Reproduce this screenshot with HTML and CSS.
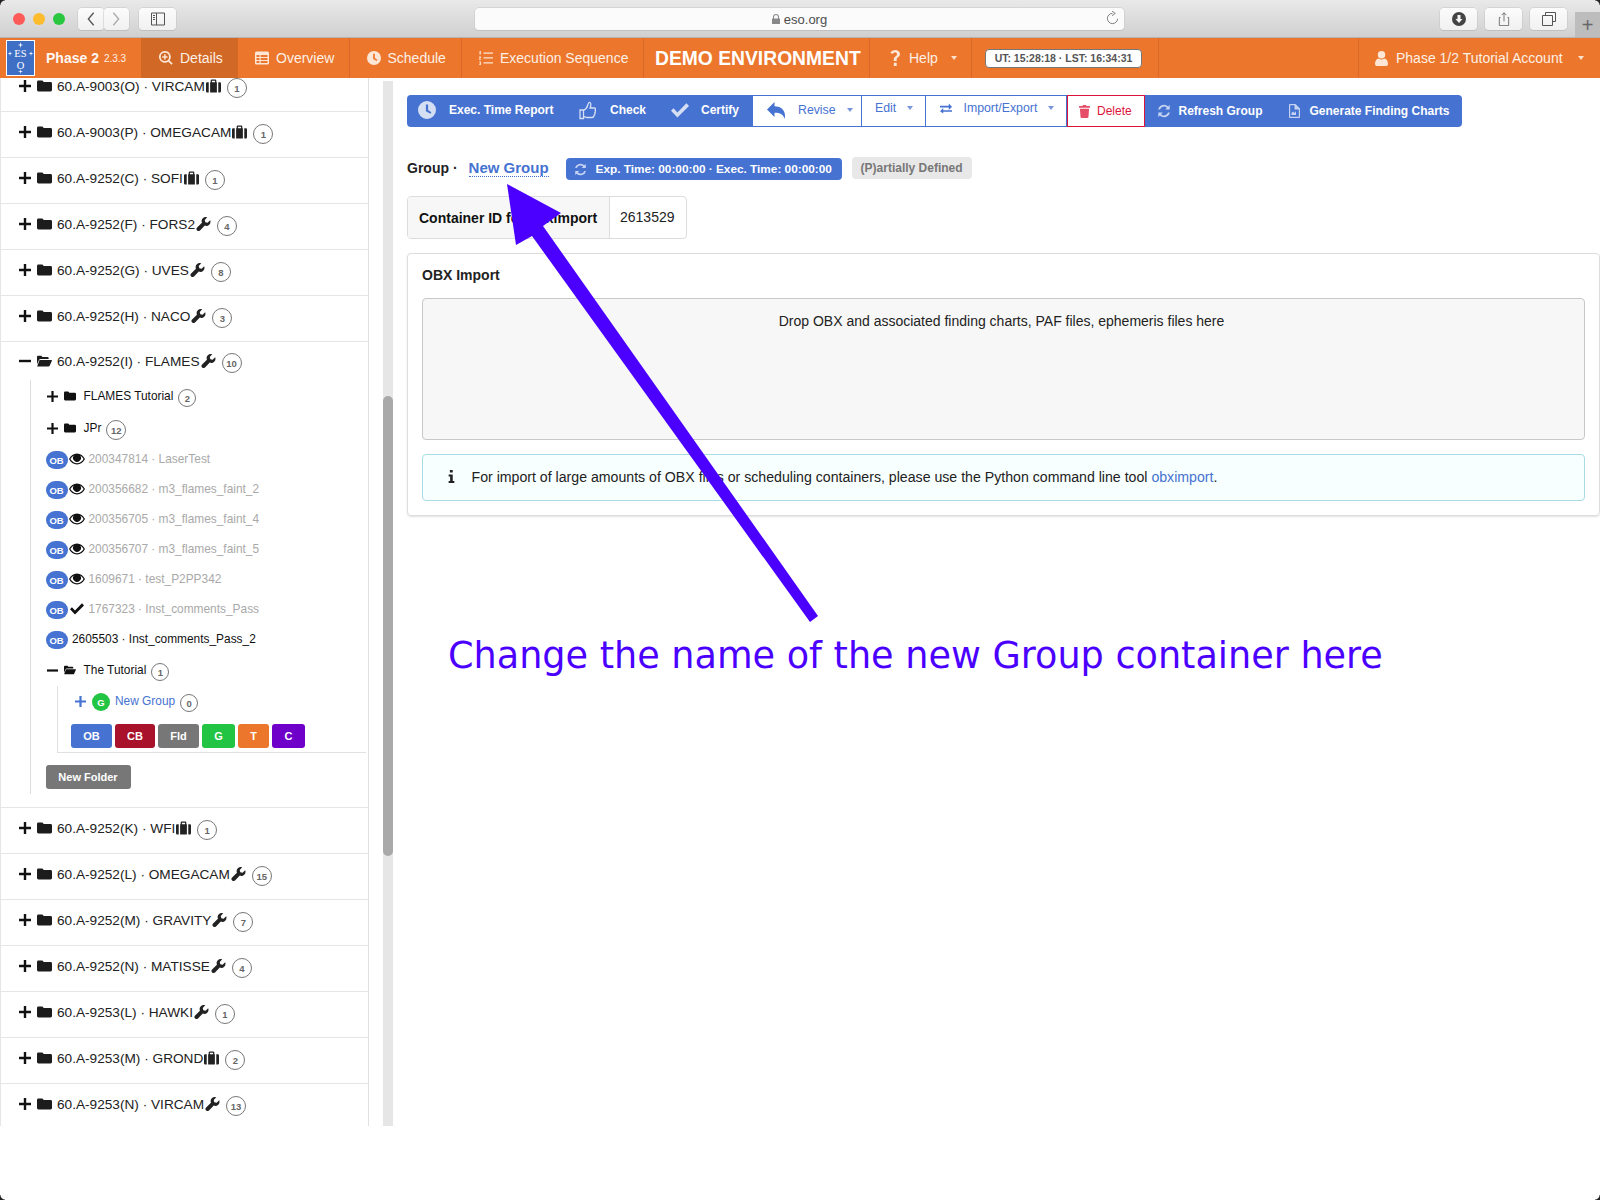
FILE: index.html
```html
<!DOCTYPE html>
<html lang="en">
<head>
<meta charset="utf-8">
<title>Phase 2</title>
<link rel="stylesheet" href="styles.css">
</head>
<body>
<svg class="defs" xmlns="http://www.w3.org/2000/svg">
  <symbol id="plus" viewBox="0 0 12 12"><path d="M4.800 0h2.400v4.800H12v2.400H7.200V12H4.800V7.200H0V4.800h4.800z"/></symbol>
  <symbol id="minus" viewBox="0 0 12 12"><rect x="0" y="4.800" width="12" height="2.400"/></symbol>
  <symbol id="folder" viewBox="0 0 15 12"><path d="M1.400 0.500h3.600a1.400 1.400 0 0 1 1.200.8l.4.7h7a1.400 1.400 0 0 1 1.400 1.400v6.700a1.400 1.400 0 0 1-1.400 1.400H1.400A1.400 1.400 0 0 1 0 10.100V1.900A1.400 1.400 0 0 1 1.400.5z"/></symbol>
  <symbol id="folder-open" viewBox="0 0 16 12"><path d="M0 9.500V1.500A1.200 1.200 0 0 1 1.200.3h3.400l1.200 1.400h5.400a1.200 1.200 0 0 1 1.200 1.200v1H3.800a2 2 0 0 0-1.700 1zM3 5h12.500a.5.5 0 0 1 .4.700l-2.400 5.300a1.500 1.500 0 0 1-1.300.8H.7a.4.4 0 0 1-.4-.6l2-5.300A1.200 1.200 0 0 1 3 5z"/></symbol>
  <symbol id="wrench" viewBox="0 0 16 16"><path d="M15.600 3.700 12.700 6.600l-2.600-.7-.7-2.600L12.300.4A4.700 4.700 0 0 0 6.200 6.500L.7 12a2.300 2.300 0 0 0 3.300 3.300L9.500 9.800a4.700 4.700 0 0 0 6.100-6.100z"/></symbol>
  <symbol id="case" viewBox="0 0 16 14"><path d="M5 3V1.200A1.200 1.200 0 0 1 6.200 0h3.600A1.200 1.200 0 0 1 11 1.200V3h.6v11H4.400V3zM6.300 3h3.400V1.300H6.300zM0 4.300A1.300 1.300 0 0 1 1.300 3h1.600v11H1.300A1.300 1.300 0 0 1 0 12.700zM13.100 3h1.600A1.300 1.300 0 0 1 16 4.300v8.400a1.300 1.300 0 0 1-1.300 1.300h-1.600z"/></symbol>
  <symbol id="eye" viewBox="0 0 16 12"><path fill-rule="evenodd" d="M8 .5c3.500 0 6.300 2.200 8 5.500-1.700 3.300-4.500 5.500-8 5.500S1.700 9.300 0 6C1.700 2.700 4.500.5 8 .5zM1.400 6C2.900 8.600 5.200 10.300 8 10.300S13.100 8.600 14.600 6c-.9-1.500-2-2.700-3.400-3.500a4 4 0 1 1-6.400 0C3.400 3.300 2.300 4.500 1.400 6z"/><circle cx="6.700" cy="4.200" r="1.200"/></symbol>
  <symbol id="check" viewBox="0 0 16 13"><path d="M2.200 4.400 0 6.700 5.700 12.800 16 2.400 13.700 0 5.700 8.200z"/></symbol>
  <symbol id="clock" viewBox="0 0 16 16"><path fill-rule="evenodd" d="M8 0a8 8 0 1 1 0 16A8 8 0 0 1 8 0zM7 3v6l4 2.400.9-1.400L9 8V3z"/></symbol>
  <symbol id="thumb" viewBox="0 0 17 18"><path fill="none" stroke="currentColor" stroke-width="1.300" d="M1 8.500h3.500v8.500H1zM4.500 9c2-1 3.700-3 4.300-5.500.3-1.300.5-2.700 1.500-2.700 1.600 0 2 2.400.8 5.700h4c1.600 0 1.800 1.500 1 2.300.7.900.5 2-.3 2.500.4 1 0 2-.8 2.300.2 1.200-.5 2.400-2 2.400H8c-1.300 0-2.400-.8-3.500-1"/></symbol>
  <symbol id="reply" viewBox="0 0 18 17"><path d="M7.500 0v4.200C13 4.300 18 7 18 14c0 1-.2 2-.5 3-.8-4.400-4.200-6.300-10-6.300V15L0 7.500z"/></symbol>
  <symbol id="exchange" viewBox="0 0 13 11"><path d="M0 2.500h9.500V0L13 3.500 9.500 7V4.300H0zM13 7.300H3.500V5L0 8.500 3.500 11V9H13z"/></symbol>
  <symbol id="trash" viewBox="0 0 12 14"><path d="M4 1V.6A.6.600 0 0 1 4.600 0h2.800a.6.600 0 0 1 .6.600V1h3.400a.6.600 0 0 1 .6.600V3H0V1.600A.6.600 0 0 1 .6 1zM1 4h10l-.7 9a1.100 1.100 0 0 1-1.100 1H2.800a1.100 1.100 0 0 1-1.100-1z"/></symbol>
  <symbol id="refresh" viewBox="0 0 14 14"><path d="M12.700 1v4.500H8.200l1.700-1.700A4.200 4.200 0 0 0 3 5.500H1.100A6 6 0 0 1 11.200 2.500zM1.300 13V8.500h4.500l-1.700 1.700a4.200 4.200 0 0 0 6.900-1.700h1.900A6 6 0 0 1 2.800 11.500z"/></symbol>
  <symbol id="filechart" viewBox="0 0 11 14"><path fill-rule="evenodd" d="M0 1a1 1 0 0 1 1-1h5.500L11 4.500V13a1 1 0 0 1-1 1H1a1 1 0 0 1-1-1zM1.200 1.200v11.600h8.600V5.500H5.500V1.200zM2.500 11V9l1.500-1.500L5.500 9 7 7v4z"/></symbol>
  <symbol id="search" viewBox="0 0 15 15"><path fill-rule="evenodd" d="M6.300 0a6.300 6.300 0 0 1 5 10.100l3.400 3.400-1.300 1.300-3.400-3.400A6.300 6.300 0 1 1 6.300 0zm0 1.900a4.400 4.400 0 1 0 0 8.800 4.400 4.400 0 0 0 0-8.800zM5.500 3.500h1.600v2h2v1.600h-2v2H5.500v-2h-2V5.500h2z"/></symbol>
  <symbol id="table" viewBox="0 0 14 13"><path fill-rule="evenodd" d="M1.500 0h11A1.500 1.500 0 0 1 14 1.500v10a1.500 1.500 0 0 1-1.500 1.500h-11A1.500 1.500 0 0 1 0 11.500v-10A1.500 1.500 0 0 1 1.500 0zM1.500 3.500v1.900h3V3.500zm4.200 0v1.900h6.800V3.500zM1.500 6.500v1.900h3V6.500zm4.200 0v1.900h6.800V6.500zM1.500 9.500v1.900h3V9.500zm4.200 0v1.900h6.800V9.500z"/></symbol>
  <symbol id="list" viewBox="0 0 14 14"><path d="M4.500 1.500H14v1.300H4.500zM4.500 6.300H14v1.300H4.500zM4.500 11.200H14v1.300H4.500zM.5 0h1.300v3.500H.5zM0 5.500h2v1L1 8h1v.8H0V8l1-1.500H0zM0 10.500h2v3.500H0v-.8h1.200v-.6H.4v-.7h.8v-.6H0z"/></symbol>
  <symbol id="question" viewBox="0 0 10 16"><path d="M3.800 11V8.900c0-2.400 3.200-2.800 3.200-4.700 0-1-.8-1.700-2-1.700-1.100 0-2 .6-2.800 1.600L.4 2.500C1.600.9 3.200 0 5.300 0 8 0 10 1.700 10 4.100c0 3.100-3.300 3.500-3.300 5.100V11zM3.800 12.800h2.900V16H3.800z"/></symbol>
  <symbol id="user" viewBox="0 0 14 16"><circle cx="7" cy="4" r="4"/><path d="M0 14c0-3.500 1.500-5.500 4-6 .9.700 1.900 1 3 1s2.100-.3 3-1c2.500.5 4 2.500 4 6a2 2 0 0 1-2 2H2a2 2 0 0 1-2-2z"/></symbol>
  <symbol id="info" viewBox="0 0 7 16"><path d="M1.500 0h3.500v3H1.500zM0 5.500h5v8h2V16H0v-2.500h1.800V8H0z"/></symbol>
  <symbol id="star" viewBox="0 0 8 8"><path d="M4 0l.7 3.300L8 4l-3.300.7L4 8l-.7-3.300L0 4l3.300-.7z"/></symbol>
</svg>

<header class="chrome">
  <div class="lights"><i class="light red"></i><i class="light yellow"></i><i class="light green"></i></div>
  <div class="navpair">
    <span class="cbtn half"><svg class="cicon" viewBox="0 0 10 18"><path d="M8 2 2 9l6 7"/></svg></span>
    <span class="cbtn half"><svg class="cicon faint" viewBox="0 0 10 18"><path d="M2 2l6 7-6 7"/></svg></span>
  </div>
  <span class="cbtn side"><svg class="sideicon" viewBox="0 0 14 14"><path d="M.5 1h13v12H.500zM5.500 1v12M2 3.500h2M2 5.500h2M2 7.500h2"/></svg></span>
  <div class="url">
    <svg class="lock" viewBox="0 0 8 10"><path d="M1 4.500V3a3 3 0 0 1 6 0v1.500h1V10H0V4.500zM2 4.500h4V3a2 2 0 0 0-4 0z"/></svg>
    <span>eso.org</span>
    <svg class="reload" viewBox="0 0 14 16"><path d="M7 2.500a5.500 5.500 0 1 0 5.500 5.800M6.500 0l3.500 2.500-3.500 2.500"/></svg>
  </div>
  <div class="cright">
    <span class="cbtn right"><svg class="dl" viewBox="0 0 14 14"><path fill-rule="evenodd" d="M7 0a7 7 0 1 1 0 14A7 7 0 0 1 7 0zM5.500 3v4H3.500L7 11l3.500-4h-2V3z"/></svg></span>
    <span class="cbtn right"><svg class="sideicon" viewBox="0 0 14 18"><path d="M2.500 7H1v10.500h12V7h-1.500M7 12V1M4 4l3-3 3 3"/></svg></span>
    <span class="cbtn right"><svg class="sideicon" viewBox="0 0 14 14"><path d="M3.500 3.500V.5h10v9h-3M.5 3.500h10v10H.500z"/></svg></span>
  </div>
  <span class="newtab">+</span>
</header>

<nav class="nav">
  <div class="brand">
    <svg class="logo" viewBox="0 0 29 36">
      <rect x="0.500" y="0.500" width="28" height="35" fill="#3f6fc4" stroke="#fff"/>
      <use href="#star" x="11.500" y="2" width="6" height="6" fill="#fff"/>
      <use href="#star" x="1.500" y="11" width="5" height="5" fill="#fff"/>
      <use href="#star" x="22.500" y="11" width="5" height="5" fill="#fff"/>
      <use href="#star" x="12" y="29" width="5" height="5" fill="#fff"/>
      <text class="logotext" x="14.500" y="16.500">ES</text>
      <text class="logotext" x="14.500" y="28.500">O</text>
    </svg>
    <span class="brandname">Phase 2</span><span class="brandver">2.3.3</span>
  </div>
  <a class="tab active"><svg class="tabicon"><use href="#search"/></svg>Details</a>
  <a class="tab t-over"><svg class="tabicon"><use href="#table"/></svg>Overview</a>
  <a class="tab t-sched"><svg class="tabicon"><use href="#clock"/></svg>Schedule</a>
  <a class="tab t-seq"><svg class="tabicon"><use href="#list"/></svg>Execution Sequence</a>
  <span class="demo">DEMO ENVIRONMENT</span>
  <a class="tab help"><svg class="qicon"><use href="#question"/></svg>Help<i class="caret navcaret"></i></a>
  <div class="clockcell"><span class="clockchip">UT: 15:28:18 · LST: 16:34:31</span></div>
  <div class="navfill"></div>
  <a class="account"><svg class="usericon"><use href="#user"/></svg>Phase 1/2 Tutorial Account<i class="caret navcaret acaret"></i></a>
</nav>

<div class="body">
  <aside class="sidebar">
    <div class="tree">
      <div class="row first"><div class="head"><svg class="tog"><use href="#plus"/></svg><svg class="fold"><use href="#folder"/></svg><span>60.A-9003(O) · VIRCAM</span><svg class="inst"><use href="#case"/></svg><span class="count">1</span></div></div>
      <div class="row"><div class="head"><svg class="tog"><use href="#plus"/></svg><svg class="fold"><use href="#folder"/></svg><span>60.A-9003(P) · OMEGACAM</span><svg class="inst"><use href="#case"/></svg><span class="count">1</span></div></div>
      <div class="row"><div class="head"><svg class="tog"><use href="#plus"/></svg><svg class="fold"><use href="#folder"/></svg><span>60.A-9252(C) · SOFI</span><svg class="inst"><use href="#case"/></svg><span class="count">1</span></div></div>
      <div class="row"><div class="head"><svg class="tog"><use href="#plus"/></svg><svg class="fold"><use href="#folder"/></svg><span>60.A-9252(F) · FORS2</span><svg class="inst"><use href="#wrench"/></svg><span class="count">4</span></div></div>
      <div class="row"><div class="head"><svg class="tog"><use href="#plus"/></svg><svg class="fold"><use href="#folder"/></svg><span>60.A-9252(G) · UVES</span><svg class="inst"><use href="#wrench"/></svg><span class="count">8</span></div></div>
      <div class="row"><div class="head"><svg class="tog"><use href="#plus"/></svg><svg class="fold"><use href="#folder"/></svg><span>60.A-9252(H) · NACO</span><svg class="inst"><use href="#wrench"/></svg><span class="count">3</span></div></div>
      <div class="row open">
        <div class="head"><svg class="tog"><use href="#minus"/></svg><svg class="fold"><use href="#folder-open"/></svg><span>60.A-9252(I) · FLAMES</span><svg class="inst"><use href="#wrench"/></svg><span class="count">10</span></div>
        <div class="children">
          <div class="sub sub-folder"><svg class="stog"><use href="#plus"/></svg><svg class="sfold"><use href="#folder"/></svg><span>FLAMES Tutorial</span><span class="count small">2</span></div>
          <div class="sub sub-folder"><svg class="stog"><use href="#plus"/></svg><svg class="sfold"><use href="#folder"/></svg><span>JPr</span><span class="count">12</span></div>
          <div class="ob"><span class="pill">OB</span><svg class="eye"><use href="#eye"/></svg><span class="faded">200347814 · LaserTest</span></div>
          <div class="ob"><span class="pill">OB</span><svg class="eye"><use href="#eye"/></svg><span class="faded">200356682 · m3_flames_faint_2</span></div>
          <div class="ob"><span class="pill">OB</span><svg class="eye"><use href="#eye"/></svg><span class="faded">200356705 · m3_flames_faint_4</span></div>
          <div class="ob"><span class="pill">OB</span><svg class="eye"><use href="#eye"/></svg><span class="faded">200356707 · m3_flames_faint_5</span></div>
          <div class="ob"><span class="pill">OB</span><svg class="eye"><use href="#eye"/></svg><span class="faded">1609671 · test_P2PP342</span></div>
          <div class="ob"><span class="pill">OB</span><svg class="eye tick"><use href="#check"/></svg><span class="faded">1767323 · Inst_comments_Pass</span></div>
          <div class="ob"><span class="pill">OB</span><span class="plain">2605503 · Inst_comments_Pass_2</span></div>
          <div class="sub sub-folder tut"><svg class="stog"><use href="#minus"/></svg><svg class="sfold"><use href="#folder-open"/></svg><span>The Tutorial</span><span class="count small">1</span></div>
          <div class="nested">
            <div class="grp"><svg class="gtog"><use href="#plus"/></svg><span class="gdot">G</span><span class="glabel">New Group</span><span class="count small">0</span></div>
            <div class="adders"><span class="add a-ob">OB</span><span class="add a-cb">CB</span><span class="add a-fld">Fld</span><span class="add a-g">G</span><span class="add a-t">T</span><span class="add a-c">C</span></div>
          </div>
          <span class="newfolder">New Folder</span>
        </div>
      </div>
      <div class="row"><div class="head"><svg class="tog"><use href="#plus"/></svg><svg class="fold"><use href="#folder"/></svg><span>60.A-9252(K) · WFI</span><svg class="inst"><use href="#case"/></svg><span class="count">1</span></div></div>
      <div class="row"><div class="head"><svg class="tog"><use href="#plus"/></svg><svg class="fold"><use href="#folder"/></svg><span>60.A-9252(L) · OMEGACAM</span><svg class="inst"><use href="#wrench"/></svg><span class="count">15</span></div></div>
      <div class="row"><div class="head"><svg class="tog"><use href="#plus"/></svg><svg class="fold"><use href="#folder"/></svg><span>60.A-9252(M) · GRAVITY</span><svg class="inst"><use href="#wrench"/></svg><span class="count">7</span></div></div>
      <div class="row"><div class="head"><svg class="tog"><use href="#plus"/></svg><svg class="fold"><use href="#folder"/></svg><span>60.A-9252(N) · MATISSE</span><svg class="inst"><use href="#wrench"/></svg><span class="count">4</span></div></div>
      <div class="row"><div class="head"><svg class="tog"><use href="#plus"/></svg><svg class="fold"><use href="#folder"/></svg><span>60.A-9253(L) · HAWKI</span><svg class="inst"><use href="#wrench"/></svg><span class="count">1</span></div></div>
      <div class="row"><div class="head"><svg class="tog"><use href="#plus"/></svg><svg class="fold"><use href="#folder"/></svg><span>60.A-9253(M) · GROND</span><svg class="inst"><use href="#case"/></svg><span class="count">2</span></div></div>
      <div class="row"><div class="head"><svg class="tog"><use href="#plus"/></svg><svg class="fold"><use href="#folder"/></svg><span>60.A-9253(N) · VIRCAM</span><svg class="inst"><use href="#wrench"/></svg><span class="count">13</span></div></div>
    </div>
    <div class="track"><div class="thumb"></div></div>
  </aside>

  <main class="main">
    <div class="toolbar">
      <a class="tb solid t-exec"><svg class="ti ti-clock"><use href="#clock"/></svg>Exec. Time Report</a>
      <a class="tb solid t-check"><svg class="ti ti-thumb"><use href="#thumb"/></svg>Check</a>
      <a class="tb solid t-cert"><svg class="ti ti-check"><use href="#check"/></svg>Certify</a>
      <a class="tb ghost t-revise"><svg class="ti ti-reply"><use href="#reply"/></svg>Revise<i class="caret bluecaret"></i></a>
      <a class="tb ghost raised t-edit">Edit<i class="caret bluecaret"></i></a>
      <a class="tb ghost raised t-imp"><svg class="ti ti-ex"><use href="#exchange"/></svg>Import/Export<i class="caret bluecaret"></i></a>
      <a class="tb danger"><svg class="ti ti-trash"><use href="#trash"/></svg>Delete</a>
      <a class="tb solid t-refresh"><svg class="ti ti-ref"><use href="#refresh"/></svg>Refresh Group</a>
      <a class="tb solid t-gen"><svg class="ti ti-file"><use href="#filechart"/></svg>Generate Finding Charts</a>
    </div>

    <div class="titleline">
      <span class="kind">Group ·</span>
      <a class="gname">New Group</a>
      <span class="timebadge"><svg class="ti ti-ref2"><use href="#refresh"/></svg>Exp. Time: 00:00:00 · Exec. Time: 00:00:00</span>
      <span class="statebadge">(P)artially Defined</span>
    </div>

    <div class="idbox"><span class="idlabel">Container ID for obximport</span><span class="idvalue">2613529</span></div>

    <section class="card">
      <h2 class="cardtitle">OBX Import</h2>
      <div class="drop">Drop OBX and associated finding charts, PAF files, ephemeris files here</div>
      <div class="alert"><svg class="alerti"><use href="#info"/></svg><span>For import of large amounts of OBX files or scheduling containers, please use the Python command line tool <a class="alink">obximport</a>.</span></div>
    </section>
  </main>
</div>

<svg class="arrow" viewBox="0 0 1600 1200"><polygon points="507,184 561,213 543,226 818,616 810,622 532,236 516,245"/></svg>
<div class="note">Change the name of the new Group container here</div>
<i class="corner c-tl"></i><i class="corner c-tr"></i><i class="corner c-bl"></i><i class="corner c-br"></i>
</body>
</html>
```

FILE: styles.css
```css
* { box-sizing: border-box; }
html, body { margin: 0; padding: 0; }
body {
  width: 1600px;
  height: 1200px;
  overflow: hidden;
  position: relative;
  background: #fff;
  font-family: "Liberation Sans", Arial, sans-serif;
  font-size: 14px;
  color: #212121;
}
svg { fill: currentColor; display: block; flex: none; }
.defs { display: none; }

/* browser chrome */
.chrome {
  height: 38px;
  display: flex;
  align-items: flex-start;
  padding-top: 8px;
  background: linear-gradient(#e9e9e9, #d0d0d0);
  border-bottom: 1px solid #b4b4b4;
  color: #555;
}
.lights { display: flex; gap: 8px; margin: 5px 0 0 13px; }
.light { width: 12px; height: 12px; border-radius: 50%; display: block; }
.red { background: #fc5b57; }
.yellow { background: #fdbc2e; }
.green { background: #29c73f; }
.navpair { display: flex; margin-left: 13px; }
.cbtn {
  height: 22px;
  background: linear-gradient(#fcfcfc, #f1f1f1);
  border-radius: 4px;
  box-shadow: 0 0 0 .5px #c3c3c3, 0 1px 0 #bdbdbd;
  display: flex;
  align-items: center;
  justify-content: center;
}
.half { width: 25.500px; }
.side { width: 37px; margin-left: 10px; }
.right { width: 37px; }
.cicon { width: 10px; height: 16px; fill: none; stroke: #555; stroke-width: 1.500; }
.faint { stroke: #aaa; }
.sideicon { width: 14px; height: 14px; fill: none; stroke: #555; stroke-width: 1; }
.url {
  width: 649px;
  height: 22px;
  margin-left: 299px;
  background: #fbfbfb;
  border-radius: 4px;
  box-shadow: 0 0 0 .5px #c6c6c6, 0 1px 0 #bdbdbd;
  display: flex;
  align-items: center;
  justify-content: center;
  gap: 4px;
  font-size: 13px;
  color: #4d4d4d;
  position: relative;
}
.lock { width: 8px; height: 10px; fill: #888; }
.reload { width: 13px; height: 15px; fill: none; stroke: #777; stroke-width: 1; position: absolute; right: 5px; top: 3px; }
.cright { display: flex; gap: 8px; margin-left: 316px; }
.dl { width: 14px; height: 14px; fill: #444; }
.newtab {
  margin-left: 8px;
  margin-top: 4px;
  width: 25px;
  height: 25px;
  background: #bdbdbd;
  color: #666;
  font-size: 20px;
  line-height: 26px;
  text-align: center;
}

/* app nav */
.nav {
  height: 40px;
  display: flex;
  align-items: stretch;
  background: #ec762b;
  color: #fff;
  font-size: 14px;
}
.brand { width: 141px; display: flex; align-items: center; padding-left: 6px; }
.logo { width: 29px; height: 36px; }
.logotext { font-family: "Liberation Serif", serif; font-size: 10.500px; fill: #fff; text-anchor: middle; }
.brandname { font-weight: 700; font-size: 14px; margin-left: 11px; opacity: .95; }
.brandver { font-size: 10px; margin-left: 5px; opacity: .9; }
.tab {
  display: flex;
  align-items: center;
  padding: 0 0 0 17px;
  border-right: 1px solid #d9682a;
  color: #fdf0e6;
  white-space: nowrap;
}
.tab.active { background: #d16825; width: 97px; padding-left: 18px; border-right-color: #d16825; }
.t-over { width: 111.500px; }
.t-sched { width: 112.500px; }
.t-seq { width: 182px; }
.tabicon { width: 14px; height: 14px; margin-right: 7px; fill: #fde6d5; }
.demo {
  display: flex;
  align-items: center;
  padding: 2px 0 0 11px;
  border-right: 1px solid #d9682a;
  font-size: 19.300px;
  font-weight: 700;
  width: 226px;
  white-space: nowrap;
}
.help { width: 102px; padding-left: 20px; }
.qicon { width: 10px; height: 16px; margin-right: 9px; fill: #fde6d5; }
.caret { display: block; width: 0; height: 0; border-style: solid; border-width: 4px 3.500px 0; border-color: transparent; }
.navcaret { border-top-color: #fbe0cc; margin-left: 13px; }
.acaret { margin-left: 15px; }
.clockcell { width: 187px; display: flex; align-items: center; padding-left: 13px; border-right: 1px solid #d9682a; }
.clockchip {
  width: 157px;
  height: 19px;
  background: #fff;
  border: 1px solid #777;
  border-radius: 4px;
  color: #555;
  font-size: 10.500px;
  font-weight: 700;
  line-height: 17px;
  text-align: center;
  white-space: nowrap;
}
.navfill { width: 200px; border-right: 1px solid #d9682a; }
.account { flex: 1; display: flex; align-items: center; padding-left: 16px; color: #fdf0e6; white-space: nowrap; }
.usericon { width: 13px; height: 15px; margin-right: 8px; fill: #fde6d5; }

/* body */
.body { height: 1048px; display: flex; }
.sidebar { width: 393px; display: flex; flex: none; height: 100%; }
.tree {
  width: 369px;
  height: 100%;
  overflow: hidden;
  border-left: 1px solid #e6e6e6;
  border-right: 1px solid #e0e0e0;
  font-size: 13.650px;
}
.row { height: 46px; border-bottom: 1px solid #e6e6e6; }
.row.first { height: 34px; overflow: hidden; }
.row.first .head { margin-top: -12px; }
.row.open { height: 467px; }
.row.open > .head { margin-top: -1px; }
.head { height: 40px; display: flex; align-items: center; padding-left: 18px; color: #212121; white-space: nowrap; }
.tog { width: 12px; height: 12px; color: #111; }
.fold { width: 15px; height: 12px; margin: 0 5px 0 6px; color: #1c1c1c; }
.inst { width: 15px; height: 14px; margin: 0 6px 0 1px; color: #222; }
.count {
  width: 20px;
  height: 20px;
  margin-top: 4px;
  border: 1px solid #777;
  border-radius: 50%;
  font-size: 9.500px;
  font-weight: 700;
  color: #666;
  line-height: 19px;
  text-align: center;
  flex: none;
}
.count.small { width: 18px; height: 18px; line-height: 17px; margin-left: 5px; }
.children {
  margin: -1px 0 0 28.500px;
  height: 414px;
  border-left: 1px solid #dcdcdc;
  padding-left: 15px;
  font-size: 11.900px;
}
.sub { height: 32px; display: flex; align-items: center; padding-left: 1.500px; color: #111; white-space: nowrap; }
.sub .count { margin-left: 5px; }
.stog { width: 11px; height: 11px; color: #111; }
.sfold { width: 12px; height: 10px; margin: 0 7.500px 0 6px; color: #111; }
.sub:nth-child(2) { margin-bottom: 1px; }
.ob { height: 30px; display: flex; align-items: center; white-space: nowrap; }
.pill {
  width: 22px;
  height: 18px;
  border-radius: 9px;
  background: #4672d1;
  color: #fff;
  font-size: 9.500px;
  font-weight: 700;
  line-height: 19px;
  text-align: center;
  flex: none;
}
.eye { width: 16px; height: 12px; margin: -2px 4px 0 1px; color: #111; }
.tick { height: 12px; width: 14px; margin: -2px 5px 0 2px; }
.faded { color: #a9a9a9; margin-top: -2px; }
.plain { color: #111; margin: -2px 0 0 4.500px; }
.tut { height: 28px; margin-top: 1px; }
.nested {
  margin: 2px 0 0 11.500px;
  width: 309px;
  height: 67px;
  border-left: 1px solid #e0e0e0;
  border-bottom: 1px solid #e0e0e0;
  padding-left: 17px;
}
.grp { height: 30px; display: flex; align-items: center; white-space: nowrap; }
.gtog { width: 11px; height: 11px; color: #4672d1; }
.gdot {
  width: 18px;
  height: 18px;
  border-radius: 50%;
  background: #22c444;
  color: #fff;
  font-size: 9.500px;
  font-weight: 700;
  line-height: 19px;
  text-align: center;
  margin: 2px 5px 0 6px;
}
.glabel { color: #4672d1; }
.adders { display: flex; gap: 3px; margin: 8px 0 0 -4px; }
.add {
  height: 24px;
  border-radius: 3px;
  color: #fff;
  font-size: 11px;
  font-weight: 700;
  line-height: 24px;
  text-align: center;
}
.a-ob { width: 41px; background: #4672d1; }
.a-cb { width: 40px; background: #a8122a; }
.a-fld { width: 41px; background: #777; }
.a-g { width: 33px; background: #22c444; }
.a-t { width: 31px; background: #ec762b; }
.a-c { width: 33px; background: #6f00c9; }
.newfolder {
  display: block;
  width: 85px;
  height: 24px;
  margin-top: 12px;
  border-radius: 3px;
  background: #777;
  color: #fff;
  font-size: 11px;
  font-weight: 700;
  line-height: 24px;
  text-align: center;
}
.track { width: 10px; margin: 3px 0 0 14px; background: #e6e6e6; }
.thumb { width: 10px; height: 460px; margin-top: 315px; background: #a9a9a9; border-radius: 5px; }

/* main */
.main { flex: 1; padding: 17px 0 0 14px; min-width: 0; }
.toolbar {
  width: 1055px;
  height: 32px;
  display: flex;
  background: #4672d1;
  border-radius: 4px;
  font-size: 12px;
  white-space: nowrap;
}
.tb { display: flex; align-items: center; height: 32px; }
.solid { color: #fff; font-weight: 700; padding-bottom: 2px; }
.ghost {
  background: #fff;
  color: #4672d1;
  border: 1px solid #4672d1;
  border-left-width: 0;
  border-right-width: 1px;
  font-size: 12.300px;
  padding-bottom: 2px;
}
.raised { padding-bottom: 6px; }
.ti { flex: none; }
.t-exec { width: 172px; padding-left: 11px; }
.ti-clock { width: 18px; height: 18px; margin-right: 13px; color: #d5dff4; }
.t-check { width: 91px; padding-left: 0; }
.ti-thumb { width: 17px; height: 19px; margin-right: 14px; color: #d5dff4; }
.t-cert { width: 83px; padding-left: 1px; }
.ti-check { width: 18px; height: 15px; margin-right: 12px; color: #d5dff4; }
.t-revise { width: 109px; padding-left: 14px; }
.ti-reply { width: 18px; height: 17px; margin-right: 13px; }
.bluecaret { border-top-color: #7a96db; margin-left: 11px; }
.t-edit { width: 63.500px; padding-left: 13px; }
.t-imp { width: 141.500px; padding-left: 14px; }
.ti-ex { width: 12px; height: 11px; margin-right: 12px; }
.danger {
  width: 77.500px;
  background: #fff;
  color: #dc143c;
  border: 1px solid #dc143c;
  padding-left: 11px;
}
.ti-trash { width: 11px; height: 13px; margin-right: 7px; color: #e54d68; }
.t-refresh { width: 129px; padding-left: 12px; padding-bottom: 0; }
.ti-ref { width: 14px; height: 14px; margin-right: 8px; color: #c5d3f1; }
.t-gen { flex: 1; padding-left: 15px; padding-bottom: 0; }
.ti-file { width: 11px; height: 14px; margin-right: 10px; color: #c5d3f1; }

.titleline { display: flex; align-items: center; margin-top: 30px; height: 24px; white-space: nowrap; }
.kind { font-size: 14px; font-weight: 700; color: #222; margin-top: -3px; }
.gname {
  margin: -3px 0 0 11px;
  font-size: 15px;
  font-weight: 700;
  color: #4672d1;
  border-bottom: 1px dotted #4672d1;
  line-height: 17px;
}
.timebadge {
  margin-left: 17px;
  width: 276px;
  height: 22px;
  display: flex;
  align-items: center;
  padding-left: 8px;
  border-radius: 4px;
  background: #4672d1;
  color: #fff;
  font-size: 11.800px;
  font-weight: 700;
}
.ti-ref2 { width: 13px; height: 13px; margin-right: 9px; color: #c5d3f1; }
.statebadge {
  margin: -2px 0 0 10px;
  width: 120px;
  height: 22px;
  border-radius: 4px;
  background: #e8e8e8;
  color: #777;
  font-size: 12px;
  font-weight: 700;
  line-height: 22px;
  text-align: center;
}
.idbox {
  display: flex;
  width: 280px;
  height: 43px;
  margin-top: 15px;
  border: 1px solid #ddd;
  border-radius: 4px;
  overflow: hidden;
}
.idlabel {
  width: 202px;
  background: #f7f7f7;
  border-right: 1px solid #ddd;
  padding-left: 11px;
  font-weight: 700;
  color: #111;
  line-height: 42px;
  white-space: nowrap;
}
.idvalue { padding-left: 10px; line-height: 40px; color: #222; }
.card {
  margin-top: 14px;
  height: 263px;
  border: 1px solid #ddd;
  border-radius: 4px;
  box-shadow: 0 1px 2px rgba(0,0,0,.12);
  padding: 0 14px 0 14px;
}
.cardtitle { margin: 0; font-size: 14px; font-weight: 700; color: #222; height: 44px; line-height: 42px; }
.drop {
  height: 142px;
  background: #f7f7f7;
  border: 1px solid #c8c8c8;
  border-radius: 4px;
  text-align: center;
  padding: 14px 4px 0 0;
  line-height: 16px;
  color: #222;
}
.alert {
  margin-top: 14px;
  height: 47px;
  display: flex;
  align-items: center;
  background: #f8ffff;
  border: 1px solid #a9dbe6;
  border-radius: 4px;
  padding: 0 0 2px 25px;
  color: #222;
  font-size: 14.150px;
}
.alerti { width: 7px; height: 13px; margin-right: 16.500px; color: #222; }
.alink { color: #4672d1; }

/* annotation overlay */
.arrow { position: absolute; left: 0; top: 0; width: 1600px; height: 1200px; fill: #4b00ff; pointer-events: none; }
.note {
  position: absolute;
  left: 448px;
  top: 633px;
  font-family: "DejaVu Sans", sans-serif;
  font-size: 36.600px;
  line-height: 46px;
  color: #4b00ff;
  white-space: nowrap;
}
.corner { position: absolute; width: 5px; height: 5px; display: block; }
.c-tl { left: 0; top: 0; background: radial-gradient(circle at 100% 100%, transparent 4px, #222 5px); }
.c-tr { right: 0; top: 0; background: radial-gradient(circle at 0 100%, transparent 4px, #222 5px); }
.c-bl { left: 0; bottom: 0; background: radial-gradient(circle at 100% 0, transparent 4px, #222 5px); }
.c-br { right: 0; bottom: 0; background: radial-gradient(circle at 0 0, transparent 4px, #222 5px); }
```
